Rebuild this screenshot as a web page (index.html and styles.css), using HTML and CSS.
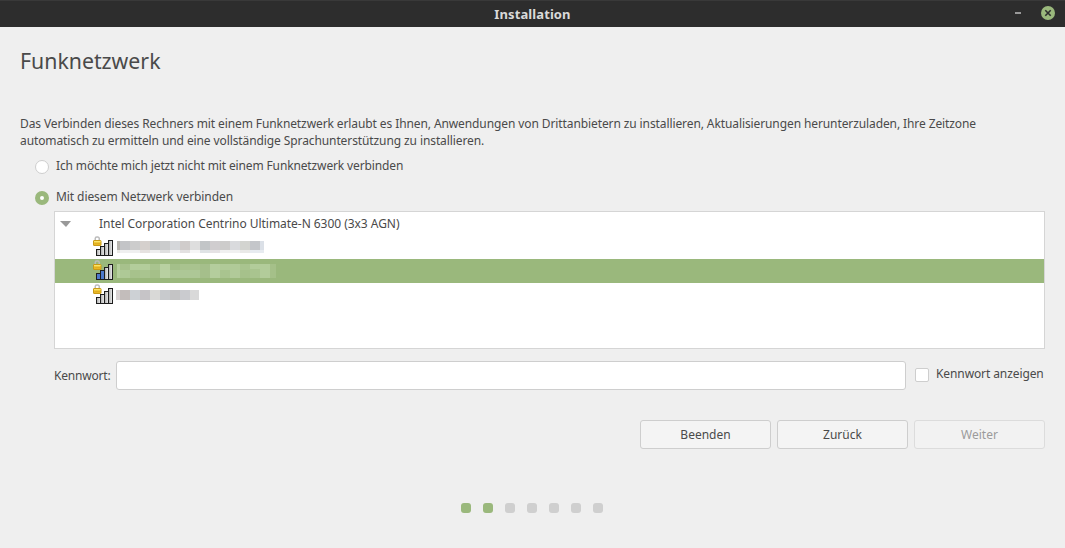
FILE: index.html
```
<!DOCTYPE html>
<html lang="de">
<head>
<meta charset="utf-8">
<title>Installation</title>
<link rel="stylesheet" href="styles.css">
</head>
<body>
<svg width="0" height="0" class="defs">
  <defs>
    <linearGradient id="bar" x1="0" x2="1"><stop offset="0" stop-color="#a9a9a9"/><stop offset="1" stop-color="#f2f2f2"/></linearGradient>
    <linearGradient id="gold" x1="0" x2="0" y1="0" y2="1"><stop offset="0" stop-color="#f7dc4a"/><stop offset="1" stop-color="#e5ad1c"/></linearGradient>
    <symbol id="lock" viewBox="0 0 9 11">
      <path d="M2.250 6V3.500a1.500 1.500 0 0 1 1.500-1.500h1a1.500 1.500 0 0 1 1.500 1.500V6" fill="none" stroke="#bcbcbc" stroke-width="1.500"/>
      <rect x=".5" y="5.500" width="7.500" height="5" rx=".5" fill="url(#gold)" stroke="#c99a17"/>
      <path d="M1 6.500h6.500" stroke="#fbe46b"/><path d="M1.500 8.500h5.500" stroke="#e0ad22"/>
    </symbol>
  </defs>
</svg>
<header class="titlebar">
  <span class="title">Installation</span>
  <span class="minimize"></span>
  <svg class="close" width="14" height="14" viewBox="0 0 14 14"><circle cx="7" cy="7" r="7" fill="#9ab87c"/><path d="M4.300 4.300l5.400 5.400M9.700 4.300l-5.400 5.400" stroke="#2d2d2d" stroke-width="1.600"/></svg>
</header>
<main class="page">
  <h1>Funknetzwerk</h1>
  <p class="intro">Das Verbinden dieses Rechners mit einem Funknetzwerk erlaubt es Ihnen, Anwendungen von Drittanbietern zu installieren, Aktualisierungen herunterzuladen, Ihre Zeitzone<br>automatisch zu ermitteln und eine vollständige Sprachunterstützung zu installieren.</p>
  <div class="choice"><span class="radio"></span><span class="choice-text">Ich möchte mich jetzt nicht mit einem Funknetzwerk verbinden</span></div>
  <div class="choice second"><span class="radio checked"></span><span class="choice-text">Mit diesem Netzwerk verbinden</span></div>
  <div class="networks">
    <div class="device"><span class="arrow"></span><span>Intel Corporation Centrino Ultimate-N 6300 (3x3 AGN)</span></div>
    <div class="network">
      <svg class="signal" width="21" height="22" viewBox="0 0 21 22"><g fill="url(#bar)" stroke="#1d1d1d"><rect x="3.500" y="14.500" width="4" height="6"/><rect x="7.500" y="11.500" width="4" height="9"/><rect x="11.500" y="8.500" width="4" height="12"/><rect x="15.500" y="5.500" width="4" height="15"/></g><use href="#lock" width="9" height="11"/></svg>
      <svg class="name" width="147" height="12" viewBox="117 0 147 12" shape-rendering="crispEdges"><rect x="117" width="3" height="9" fill="#b7b4af"/><rect x="120" width="10" height="9" fill="#c3c4c7"/><rect x="130" width="10" height="9" fill="#ccc"/><rect x="140" width="10" height="9" fill="#d5d0cd"/><rect x="150" width="10" height="9" fill="#c6c8c8"/><rect x="160" width="10" height="9" fill="#cbcccd"/><rect x="170" width="10" height="9" fill="#d5d7da"/><rect x="180" width="10" height="9" fill="#d0cccb"/><rect x="190" width="10" height="9" fill="#dedede"/><rect x="200" width="10" height="9" fill="#c2c5c7"/><rect x="210" width="10" height="9" fill="#d0cdcf"/><rect x="220" width="10" height="9" fill="#cdcccb"/><rect x="230" width="10" height="9" fill="#d9dadd"/><rect x="240" width="10" height="9" fill="#d3d4d0"/><rect x="250" width="10" height="9" fill="#c4c6ca"/><rect x="260" width="4" height="9" fill="#dbe0e7"/><rect x="117" y="9" width="3" height="3" fill="#e9e7e4"/><rect x="120" y="9" width="20" height="3" fill="#efefef"/><rect x="140" y="9" width="10" height="3" fill="#e6e2e0"/><rect x="150" y="9" width="10" height="3" fill="#eee"/><rect x="160" y="9" width="10" height="3" fill="#dfdfdf"/><rect x="170" y="9" width="10" height="3" fill="#f0f0f2"/><rect x="180" y="9" width="10" height="3" fill="#e3e1e1"/><rect x="190" y="9" width="10" height="3" fill="#f6f6f6"/><rect x="200" y="9" width="10" height="3" fill="#dfe3e5"/><rect x="210" y="9" width="10" height="3" fill="#e5e2e4"/><rect x="220" y="9" width="20" height="3" fill="#f0f0f0"/><rect x="240" y="9" width="10" height="3" fill="#e9e9e7"/><rect x="250" y="9" width="14" height="3" fill="#e7ebf0"/></svg>
    </div>
    <div class="network selected">
      <svg class="signal" width="21" height="22" viewBox="0 0 21 22"><g fill="url(#bar)" stroke="#1d1d1d"><rect x="3.500" y="14.500" width="4" height="6" fill="#4c78cc"/><rect x="7.500" y="11.500" width="4" height="9" fill="#4c78cc"/><rect x="11.500" y="8.500" width="4" height="12"/><rect x="15.500" y="5.500" width="4" height="15"/></g><use href="#lock" width="9" height="11"/></svg>
      <svg class="name" width="159" height="14" viewBox="117 0 159 14" shape-rendering="crispEdges"><rect x="117" width="159" height="14" fill="#a9c48f"/><rect x="117" width="3" height="14" fill="#b5cf9c"/><rect x="120" width="10" height="6" fill="#a7c18c"/><rect x="130" width="20" height="6" fill="#b3cd9b"/><rect x="160" width="10" height="14" fill="#b8d0a1"/><rect x="170" width="10" height="6" fill="#a4c08a"/><rect x="180" width="20" height="6" fill="#a9c38f"/><rect x="150" y="6" width="10" height="8" fill="#a5c089"/><rect x="130" y="6" width="10" height="8" fill="#a7c28c"/><rect x="120" y="6" width="10" height="8" fill="#aec996"/><rect x="170" y="6" width="30" height="8" fill="#adc796"/><rect x="200" width="10" height="14" fill="#a5bf8b"/><rect x="210" width="10" height="14" fill="#b4cd9d"/><rect x="220" width="20" height="6" fill="#b0ca98"/><rect x="230" y="6" width="10" height="8" fill="#b1ca99"/><rect x="240" y="6" width="10" height="8" fill="#a6c18b"/><rect x="250" width="20" height="5" fill="#b2cc9a"/><rect x="260" y="5" width="10" height="9" fill="#b2cc9a"/><rect x="270" width="6" height="14" fill="#a5c089"/></svg>
    </div>
    <div class="network">
      <svg class="signal" width="21" height="22" viewBox="0 0 21 22"><g fill="url(#bar)" stroke="#1d1d1d"><rect x="3.500" y="14.500" width="4" height="6"/><rect x="7.500" y="11.500" width="4" height="9"/><rect x="11.500" y="8.500" width="4" height="12"/><rect x="15.500" y="5.500" width="4" height="15"/></g><use href="#lock" width="9" height="11"/></svg>
      <svg class="name third" width="83" height="10" viewBox="116 0 83 10" shape-rendering="crispEdges"><rect x="116" width="4" height="10" fill="#d8d2d2"/><rect x="120" width="10" height="10" fill="#c3bdbb"/><rect x="130" width="10" height="10" fill="#cdd1d5"/><rect x="140" width="10" height="10" fill="#c6c4c7"/><rect x="150" width="10" height="10" fill="#d9d9d7"/><rect x="160" width="10" height="10" fill="#c8cacd"/><rect x="170" width="10" height="10" fill="#c4c4c5"/><rect x="180" width="10" height="10" fill="#cacbcf"/><rect x="190" width="9" height="10" fill="#d9d9d9"/></svg>
    </div>
  </div>
  <div class="password">
    <label for="pw">Kennwort:</label>
    <input id="pw" type="password">
    <span class="checkbox"></span>
    <span class="show">Kennwort anzeigen</span>
  </div>
  <div class="buttons"><button>Beenden</button><button>Zurück</button><button disabled>Weiter</button></div>
  <div class="steps"><i class="done"></i><i class="done"></i><i></i><i></i><i></i><i></i><i></i></div>
</main>
</body>
</html>
```
FILE: styles.css
```
* { box-sizing: border-box; }
body {
  margin: 0;
  height: 548px;
  overflow: hidden;
  background: #efefef;
  color: #4a4a4a;
  font: 12px/17px "Noto Sans", sans-serif;
  letter-spacing: -0.1px;
}
.defs { position: absolute; }
.titlebar {
  height: 27px;
  background: #2d2d2d;
  border-top: 1px solid #393939;
  display: grid;
  grid-template-columns: 1fr auto 1fr;
  align-items: center;
}
.title {
  grid-column: 2;
  grid-row: 1;
  color: #dadada;
  font-weight: 700;
  font-size: 13px;
  letter-spacing: 0.1px;
}
.minimize {
  grid-column: 3;
  grid-row: 1;
  justify-self: end;
  margin-right: 44px;
  width: 6px;
  height: 2px;
  margin-bottom: 2px;
  background: #999;
}
.close {
  grid-column: 3;
  grid-row: 1;
  justify-self: end;
  margin: 0 10px 2px 0;
}
.page { padding: 19px 20px 0; }
h1 {
  margin: 0;
  font-size: 21.300px;
  line-height: 30px;
  font-weight: 400;
  letter-spacing: 0;
}
.intro { margin: 39px 0 0; white-space: nowrap; }
.choice { display: flex; margin: 8px 0 0 15px; height: 17px; letter-spacing: -0.13px; }
.choice.second { margin-top: 14px; letter-spacing: -0.08px; }
.radio {
  width: 14px;
  height: 14px;
  margin: 3px 7px 0 0;
  background: #fff;
  border: 1px solid #cecece;
  border-radius: 50%;
}
.radio.checked { border: 5px solid #9ab87c; }
.networks {
  height: 138px;
  margin: 6px 0 0 34px;
  background: #fff;
  border: 1px solid #d5d5d5;
}
.device { display: flex; height: 23px; padding: 3px 0 0 5px; letter-spacing: -0.04px; }
.arrow {
  width: 0;
  height: 0;
  margin: 6px 28px 0 0;
  border: solid transparent;
  border-width: 6px 5px 0 6px;
  border-top-color: #999;
}
.network { display: flex; height: 24px; padding-left: 38px; }
.network.selected { background: #9ab87c; }
.name { margin: 6px 0 0 3px; }
.selected .name { margin-top: 5px; }
.name.third { margin: 7px 0 0 2px; }
.password { display: flex; margin: 12px 0 0 34px; height: 29px; }
.password label { width: 62px; padding-top: 6px; letter-spacing: -0.2px; }
.password input {
  width: 790px;
  height: 29px;
  border: 1px solid #cecece;
  border-radius: 3px;
  background: #fff;
}
.checkbox {
  width: 14px;
  height: 14px;
  margin: 7px 7px 0 9px;
  border: 1px solid #cecece;
  border-radius: 2px;
  background: #fff;
}
.show { padding-top: 4px; white-space: nowrap; }
.buttons { display: flex; justify-content: flex-end; gap: 6px; margin-top: 30px; }
button {
  width: 131px;
  height: 29px;
  padding: 0;
  border: 1px solid #cecece;
  border-radius: 3px;
  background: #f4f4f4;
  color: inherit;
  font: inherit;
}
button:disabled { background: #f2f2f2; border-color: #dcdcdc; color: #9b9b9b; }
.steps { display: flex; justify-content: center; gap: 12px; margin-top: 54px; padding-right: 1px; }
.steps i { width: 10px; height: 10px; border-radius: 3px; background: #cfcfcf; }
.steps .done { background: #9ab87c; }
```
